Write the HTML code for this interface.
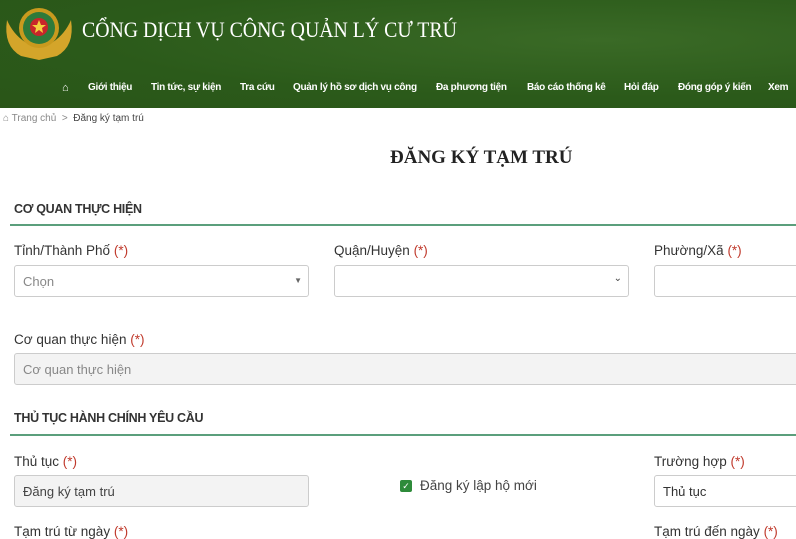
<!DOCTYPE html><html><head><meta charset="utf-8"><style>
body{margin:0;width:796px;height:535px;overflow:hidden;background:#fff;font-family:"Liberation Sans",sans-serif;position:relative}
.a{position:absolute;white-space:nowrap}
.hdr{position:absolute;left:0;top:0;width:796px;height:108px;background:radial-gradient(ellipse at 600px 40px,#3a6a26,#2b5a1a 60%,#2a5518)}
.nav{font-size:10px;color:#fff;top:82px;font-weight:bold;letter-spacing:-0.3px}
.lbl{font-size:13.5px;color:#333}
.lbl b{color:#c0392b;font-weight:normal}
.inp{position:absolute;border:1px solid #ccc;border-radius:3px;height:32px;box-sizing:border-box;font-size:13px;color:#888;padding:8px 8px}
.sec{font-size:12.5px;color:#333;font-weight:bold;letter-spacing:-0.3px}
.line{position:absolute;left:10px;width:786px;height:2px;background:#5b9f7c}
</style></head><body>
<div class="hdr"></div>
<svg class="a" style="left:3px;top:4px" width="72" height="56" viewBox="0 0 72 56"><path d="M4 16 Q0 42 18 52 L36 56 L54 52 Q72 42 68 16 Q62 30 50 38 L22 38 Q10 30 4 16Z" fill="#d4a52a"/><circle cx="36" cy="24" r="20" fill="#c99a1e"/><circle cx="36" cy="24" r="16" fill="#2f7a3a"/><circle cx="36" cy="23" r="9" fill="#c8262a"/><polygon points="36,16 38,21 43,21 39,24 40,29 36,26 32,29 33,24 29,21 34,21" fill="#f4d03f"/></svg>
<div class="a" style="left:82px;top:17px;font-family:'Liberation Serif',serif;font-size:22px;color:#fff;transform:scaleX(0.9);transform-origin:0 0">CỔNG DỊCH VỤ CÔNG QUẢN LÝ CƯ TRÚ</div>
<div class="a nav" style="left:62px;font-size:11px">⌂</div>
<div class="a nav" style="left:88px">Giới thiệu</div>
<div class="a nav" style="left:151px">Tin tức, sự kiện</div>
<div class="a nav" style="left:240px">Tra cứu</div>
<div class="a nav" style="left:293px">Quản lý hồ sơ dịch vụ công</div>
<div class="a nav" style="left:436px">Đa phương tiện</div>
<div class="a nav" style="left:527px">Báo cáo thống kê</div>
<div class="a nav" style="left:624px">Hỏi đáp</div>
<div class="a nav" style="left:678px">Đóng góp ý kiến</div>
<div class="a nav" style="left:768px">Xem</div>
<div class="a" style="left:3px;top:113px;font-size:10px;color:#888">⌂ Trang chủ &nbsp;&gt;&nbsp; <span style="color:#444">Đăng ký tạm trú</span></div>
<div class="a" style="left:390px;top:147px;font-family:'Liberation Serif',serif;font-size:19px;font-weight:bold;color:#222">ĐĂNG KÝ TẠM TRÚ</div>
<div class="a sec" style="left:14px;top:202px">CƠ QUAN THỰC HIỆN</div>
<div class="line" style="top:224px"></div>
<div class="a lbl" style="left:14px;top:243px">Tỉnh/Thành Phố <b>(*)</b></div>
<div class="a lbl" style="left:334px;top:243px">Quận/Huyện <b>(*)</b></div>
<div class="a lbl" style="left:654px;top:243px">Phường/Xã <b>(*)</b></div>
<div class="inp" style="left:14px;top:265px;width:295px">Chọn<span style="position:absolute;right:6px;top:10px;font-size:8px;color:#666">▼</span></div>
<div class="inp" style="left:334px;top:265px;width:295px"><span style="position:absolute;right:6px;top:7px;font-size:10px;color:#444">⌄</span></div>
<div class="inp" style="left:654px;top:265px;width:160px"></div>
<div class="a lbl" style="left:14px;top:332px">Cơ quan thực hiện <b>(*)</b></div>
<div class="inp" style="left:14px;top:353px;width:800px;background:#f3f3f3">Cơ quan thực hiện</div>
<div class="a sec" style="left:14px;top:411px">THỦ TỤC HÀNH CHÍNH YÊU CẦU</div>
<div class="line" style="top:434px"></div>
<div class="a lbl" style="left:14px;top:454px">Thủ tục <b>(*)</b></div>
<div class="a lbl" style="left:654px;top:454px">Trường hợp <b>(*)</b></div>
<div class="inp" style="left:14px;top:475px;width:295px;background:#f3f3f3;color:#444">Đăng ký tạm trú</div>
<div class="a" style="left:400px;top:480px;width:12px;height:12px;background:#2e8b3a;border-radius:2px;color:#fff;font-size:9px;text-align:center;line-height:12px">✓</div>
<div class="a lbl" style="left:420px;top:478px;color:#444">Đăng ký lập hộ mới</div>
<div class="inp" style="left:654px;top:475px;width:160px;color:#333">Thủ tục</div>
<div class="a lbl" style="left:14px;top:524px">Tạm trú từ ngày <b>(*)</b></div>
<div class="a lbl" style="left:654px;top:524px">Tạm trú đến ngày <b>(*)</b></div>
</body></html>
